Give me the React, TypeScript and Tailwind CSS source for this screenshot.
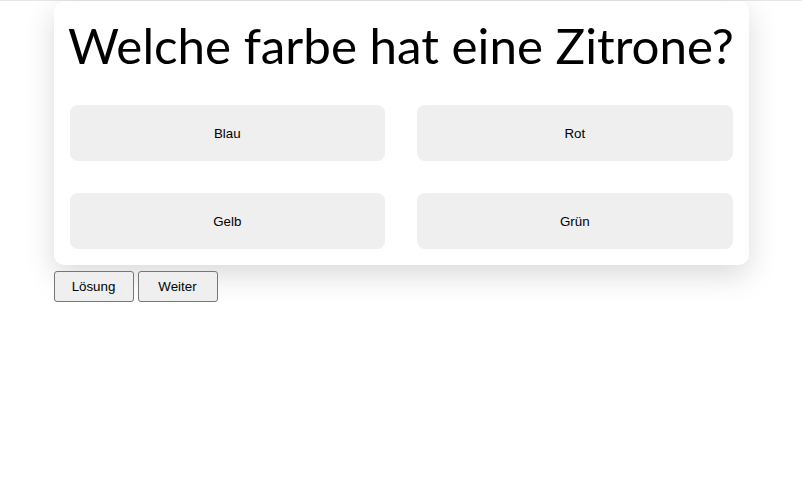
const answers = ["Blau", "Rot", "Gelb", "Grün"];

export default function App() {
  return (
    <div className="min-h-screen bg-white">
      <div className="h-px w-full bg-[#e6e6e6]" />
      <div className="mx-auto w-[695px]">
        <div className="rounded-[10px] bg-white px-4 pt-[16px] pb-4 shadow-[0_10px_30px_rgba(0,0,0,0.15)]">
          <h1 className="-mx-2 h-[56px] whitespace-nowrap text-center text-[49.3px] leading-[56px] text-black [font-family:Lato,sans-serif]">
            Welche farbe hat eine Zitrone?
          </h1>
          <div className="mt-8 grid grid-cols-2 gap-8">
            {answers.map((a) => (
              <button
                key={a}
                className="h-[56px] rounded-lg bg-[#efefef] pt-px text-[13.33px] text-black [font-family:'Liberation_Sans',Arial,sans-serif]"
              >
                {a}
              </button>
            ))}
          </div>
        </div>
        <div className="mt-[6px] flex gap-1 [font-family:'Liberation_Sans',Arial,sans-serif]">
          <button className="h-[31px] w-[80px] rounded-[3px] border border-[#767676] bg-[#efefef] pt-px text-[13.33px] text-black">
            Lösung
          </button>
          <button className="h-[31px] w-[80px] rounded-[3px] border border-[#767676] bg-[#efefef] pt-px text-[13.33px] text-black">
            Weiter
          </button>
        </div>
      </div>
    </div>
  );
}
